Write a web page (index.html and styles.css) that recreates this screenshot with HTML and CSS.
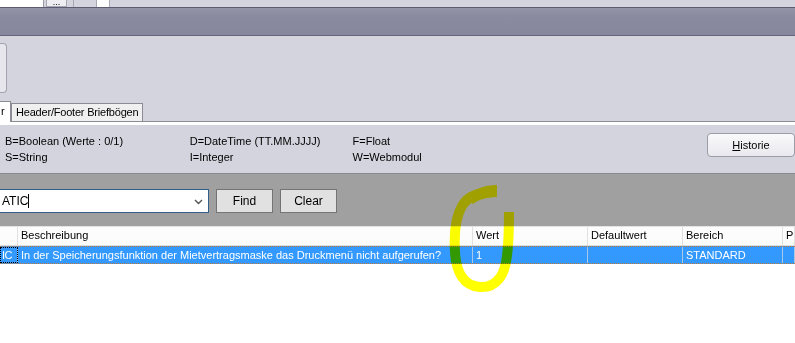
FILE: index.html
```html
<!DOCTYPE html>
<html lang="de">
<head>
  <meta charset="UTF-8">
  <title>Einstellungen</title>
  <link rel="stylesheet" href="styles.css">
</head>
<body>
  <!-- Top toolbar strip -->
  <div class="topstrip">
    <div class="strip-field"></div>
    <div class="strip-btn">...</div>
    <div class="strip-box"></div>
    <div class="strip-white"></div>
    <div class="strip-rest"></div>
  </div>

  <!-- Title band -->
  <div class="titleband"></div>

  <!-- Settings panel -->
  <div class="panel">
    <div class="panel-top">
      <div class="side-btn"></div>
    </div>
    <div class="tabs">
      <div class="tab tab-active">r</div>
      <div class="tab">Header/Footer Briefbögen</div>
    </div>
    <div class="legend">
      <div class="legend-col col-a">
        <span>B=Boolean (Werte : 0/1)</span>
        <span>S=String</span>
      </div>
      <div class="legend-col col-b">
        <span>D=DateTime (TT.MM.JJJJ)</span>
        <span>I=Integer</span>
      </div>
      <div class="legend-col col-c">
        <span>F=Float</span>
        <span>W=Webmodul</span>
      </div>
      <button class="history-btn"><u>H</u>istorie</button>
    </div>
  </div>

  <!-- Search bar -->
  <div class="searchbar">
    <div class="combo">
      <span class="combo-text">ATIC</span><span class="caret"></span>
      <svg class="combo-arrow" width="9" height="6" viewBox="0 0 9 6">
        <path d="M1 1 L4.5 4.5 L8 1" fill="none" stroke="#555" stroke-width="1.4"/>
      </svg>
    </div>
    <button class="grey-btn">Find</button>
    <button class="grey-btn">Clear</button>
  </div>

  <!-- Data grid -->
  <div class="grid">
    <div class="row head">
      <div class="cell"></div>
      <div class="cell">Beschreibung</div>
      <div class="cell">Wert</div>
      <div class="cell">Defaultwert</div>
      <div class="cell">Bereich</div>
      <div class="cell">P</div>
    </div>
    <div class="row selected">
      <div class="cell current">IC</div>
      <div class="cell">In der Speicherungsfunktion der Mietvertragsmaske das Druckmenü nicht aufgerufen?</div>
      <div class="cell">1</div>
      <div class="cell"></div>
      <div class="cell">STANDARD</div>
      <div class="cell"></div>
    </div>
  </div>

  <!-- Hand-drawn highlight -->
  <svg class="marker" width="795" height="343" viewBox="0 0 795 343">
    <path d="M497 192 C478 192 468 196 462 206 C455 218 454 236 455 252 C456 272 464 286 480 287 C497 288 505 274 507 256 C509 240 509 226 509 212"
          fill="none" stroke="#ffff00" stroke-width="10"/>
    <path d="M497 185 C484 185 473 189 465 198 L473 204 C480 199 487 197 497 197 Z" fill="#ffff00"/>
  </svg>
</body>
</html>
```

FILE: styles.css
```css
body {
  margin: 0;
  width: 795px;
  height: 343px;
  overflow: hidden;
  background-color: #fff;
  font-family: "Liberation Sans", Arial, sans-serif;
  font-size: 11px;
  color: #000;
  position: relative;
}

/* Top strip */
.topstrip {
  display: flex;
  height: 7px;
  background-color: #d4d4de;
}
.strip-field {
  width: 43px;
  background-color: #fff;
  border-right: 1px solid #9a9aa8;
}
.strip-btn {
  width: 19px;
  margin-left: 2px;
  background-color: #eeeef2;
  border: 1px solid #a8a8b4;
  border-top: none;
  font-size: 9px;
  line-height: 4px;
  text-align: center;
  overflow: hidden;
}
.strip-box {
  width: 22px;
  margin-left: 6px;
  border-left: 1px solid #a8a8b4;
  border-right: 1px solid #a8a8b4;
}
.strip-white {
  width: 12px;
  background-color: #fff;
  border-right: 1px solid #a8a8b4;
}
.strip-rest {
  flex: 1;
}

/* Title band */
.titleband {
  height: 27px;
  border-top: 1px solid #5c5c70;
  border-bottom: 1px solid #64647a;
  background: linear-gradient(#9494a8, #8a8aa0 30%, #86869c);
}

/* Panel */
.panel {
  background-color: #d4d4de;
  display: flex;
  flex-direction: column;
}
.panel-top {
  height: 65px;
  padding-top: 7px;
  box-sizing: border-box;
}
.side-btn {
  width: 7px;
  height: 50px;
  background-color: #e6e6ec;
  border: 1px solid #a4a4b0;
  border-left: none;
  border-radius: 0 4px 4px 0;
  box-sizing: border-box;
}
.tabs {
  display: flex;
  align-items: flex-end;
  height: 20px;
  border-bottom: 1px solid #8c8c94;
}
.tab {
  height: 18px;
  line-height: 17px;
  padding: 0 4px;
  letter-spacing: -0.2px;
  background-color: #f0f0f0;
  border: 1px solid #8c8c94;
  border-bottom: none;
  box-sizing: border-box;
}
.tab-active {
  height: 21px;
  width: 11px;
  padding: 0 0 0 1px;
  line-height: 18px;
  background-color: #fff;
  border-left: none;
  margin-bottom: -1px;
}
.legend {
  display: flex;
  align-items: flex-start;
  height: 52px;
  border-top: 3px solid #fff;
  box-sizing: border-box;
  padding: 8px 0 0 5px;
  border-bottom: 1px solid #8a8a92;
}
.legend-col {
  display: flex;
  flex-direction: column;
  line-height: 16px;
}
.col-a {
  width: 186px;
}
.col-b {
  width: 164px;
}
.col-c {
  width: 357px;
}
.history-btn {
  width: 88px;
  height: 24px;
  flex-shrink: 0;
  font-family: "Liberation Sans", Arial, sans-serif;
  font-size: 11px;
  color: #000;
  background: linear-gradient(#fafafc, #e8e8ee);
  border: 1px solid #9c9ca8;
  border-radius: 4px;
  padding: 0;
}

/* Search bar */
.searchbar {
  display: flex;
  align-items: center;
  gap: 7px;
  height: 52px;
  background-color: #a0a0a0;
  padding-top: 1px;
  box-sizing: border-box;
}
.combo {
  position: relative;
  width: 209px;
  height: 24px;
  background-color: #fff;
  border: 1px solid #2f5f8a;
  border-left: none;
  box-sizing: border-box;
  display: flex;
  align-items: center;
  padding-left: 2px;
  font-size: 12px;
}
.caret {
  width: 1px;
  height: 14px;
  background-color: #000;
}
.combo-arrow {
  position: absolute;
  right: 5px;
  top: 9px;
}
.grey-btn {
  height: 24px;
  width: 57px;
  background-color: #e1e1e1;
  border: 1px solid #747474;
  font-family: "Liberation Sans", Arial, sans-serif;
  font-size: 12px;
  color: #000;
  padding: 0;
}

/* Grid */
.grid {
  border-top: 1px solid #e4e4e4;
}
.row {
  display: grid;
  grid-template-columns: 18px 455px 115px 95px 100px 1fr;
  height: 18px;
}
.cell {
  border-right: 1px solid #e0e0e0;
  padding-left: 3px;
  line-height: 17px;
  white-space: nowrap;
  overflow: hidden;
}
.head {
  background-color: #fcfcfc;
  border-bottom: 1px solid #dcdcdc;
}
.selected {
  background-color: #3399ff;
  color: #fff;
  border-top: 1px dotted #c07a40;
  border-bottom: 1px dotted #c07a40;
  box-sizing: border-box;
}
.selected .cell {
  border-right-color: #a8c8e8;
  line-height: 16px;
}
.current {
  padding: 0 5px 0 0;
  text-align: right;
  letter-spacing: -0.5px;
  outline: 1px dotted #000;
  outline-offset: -1px;
}

/* Highlight overlay */
.marker {
  position: absolute;
  top: 0;
  left: 0;
  pointer-events: none;
  mix-blend-mode: multiply;
}
```
